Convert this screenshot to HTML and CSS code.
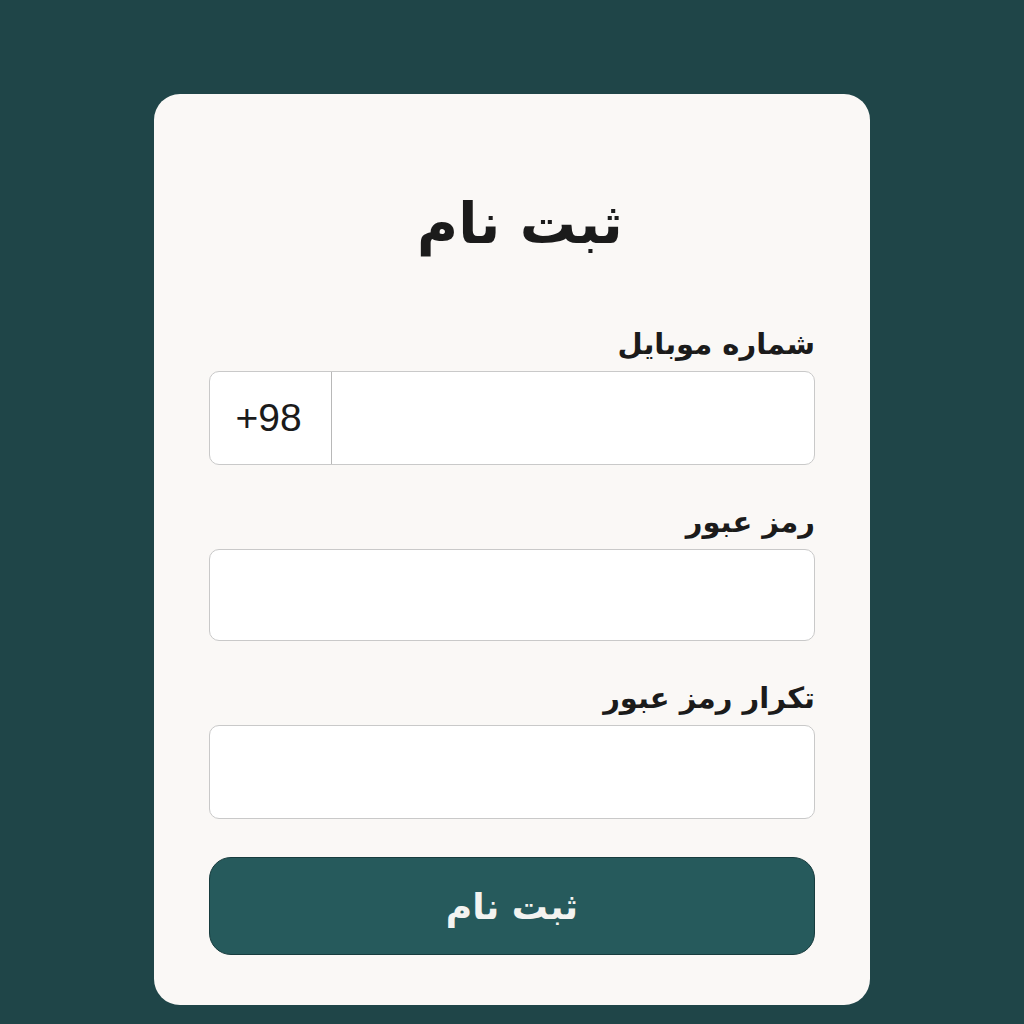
FILE: index.html
```html
<!DOCTYPE html>
<html lang="fa" dir="rtl">
  <head>
    <meta charset="UTF-8" />
    <title>ثبت نام</title>
    <link rel="stylesheet" href="styles.css">
  </head>
  <body>
    <form class="card">
      <h1 class="title">ثبت نام</h1>

      <label class="label" for="mobile">شماره موبایل</label>
      <div class="field phone">
        <input class="phone-input" id="mobile" type="tel">
        <span class="prefix">+98</span>
      </div>

      <label class="label" for="pass">رمز عبور</label>
      <input class="field short" id="pass" type="password">

      <label class="label" for="pass2">تکرار رمز عبور</label>
      <input class="field" id="pass2" type="password">

      <button class="submit" type="button">ثبت نام</button>
    </form>
  </body>
</html>
```

FILE: styles.css
```css
*{
    box-sizing: border-box;
    margin: 0;
    padding: 0;
}
body{
    background-color: #1f4548;
    font-family: "DejaVu Sans", "Noto Sans", sans-serif;
    min-height: 1024px;
    display: flex;
    justify-content: center;
    padding-top: 94px;
}
.card{
    width: 716px;
    height: 911px;
    background-color: #faf8f6;
    border-radius: 26px;
    padding: 0 55px;
    display: flex;
    flex-direction: column;
}
.title{
    text-align: center;
    font-size: 56px;
    font-weight: bold;
    color: #1b1b1b;
    margin-top: 88px;
    line-height: 84px;
    height: 84px;
    transform: translateX(8px);
}
.label{
    display: block;
    font-size: 29px;
    font-weight: bold;
    color: #1b1b1b;
    line-height: 40px;
}
.title + .label{
    margin-top: 58px;
}
.field{
    display: block;
    width: 100%;
    height: 94px;
    background-color: #fff;
    border: 1px solid #c9c9c9;
    border-radius: 10px;
    outline: none;
    font-size: 24px;
    margin-bottom: 37px;
}
.field.short{
    height: 92px;
}
.label + .field{
    margin-top: 7px;
}
.phone{
    display: flex;
    overflow: hidden;
}
.phone-input{
    flex: 1;
    border: none;
    outline: none;
    background: transparent;
    font-size: 24px;
}
.prefix{
    width: 122px;
    border-right: 1px solid #b8b8b8;
    display: flex;
    align-items: center;
    justify-content: center;
    direction: ltr;
    font-family: "Liberation Sans", Arial, sans-serif;
    font-size: 39px;
    color: #1b1b1b;
    padding-right: 4px;
}
.submit{
    margin-top: 1px;
    height: 98px;
    width: 100%;
    border: 1px solid #173c3e;
    border-radius: 22px;
    background-color: #265a5c;
    color: #f3f3f0;
    font-family: "DejaVu Sans", sans-serif;
    font-size: 36px;
    font-weight: bold;
    cursor: pointer;
}
```
